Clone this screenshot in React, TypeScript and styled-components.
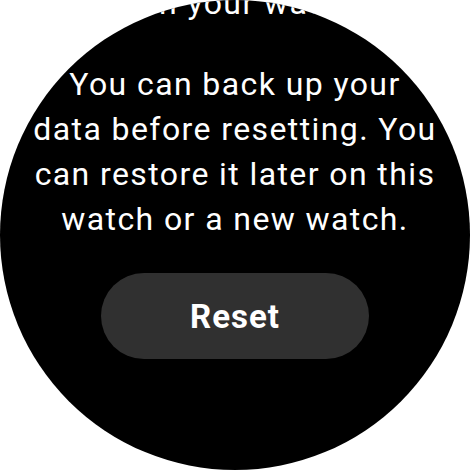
import styled, { createGlobalStyle } from "styled-components";

const GlobalStyle = createGlobalStyle`
  html, body {
    margin: 0;
    padding: 0;
    background: #ffffff;
  }
  body {
    font-family: Roboto, "Liberation Sans", sans-serif;
    -webkit-font-smoothing: antialiased;
  }
`;

const WatchScreen = styled.div`
  width: 470px;
  height: 470px;
  border-radius: 50%;
  background: #000000;
  overflow: hidden;
`;

// the list is scrolled down, so the top of it sits above the screen
const ScrollContent = styled.div<{ $offset: number }>`
  display: flex;
  flex-direction: column;
  align-items: center;
  margin-top: ${(p) => -p.$offset}px;
`;

const Message = styled.p<{ $spaceAfter: number }>`
  width: 404px;
  margin: 0 0 ${(p) => p.$spaceAfter}px;
  color: #ffffff;
  font-size: 32px;
  line-height: 45px;
  letter-spacing: 1.4px;
  text-align: center;
`;

const PillButton = styled.button`
  width: 268px;
  height: 86px;
  border: none;
  border-radius: 43px;
  background: #303030;
  color: #ffffff;
  font-family: Roboto, "Liberation Sans", sans-serif;
  font-size: 33px;
  font-weight: 700;
  letter-spacing: 1px;
  cursor: pointer;
`;

const App = () => {
  return (
    <>
      <GlobalStyle />
      <WatchScreen>
        <ScrollContent $offset={64}>
          <Message $spaceAfter={36}>
            This erases all data that
            <br />
            is on your watch.
          </Message>
          <Message $spaceAfter={31}>
            You can back up your data before resetting. You can restore it later on this watch or a new watch.
          </Message>
          <PillButton>Reset</PillButton>
        </ScrollContent>
      </WatchScreen>
    </>
  );
};

export default App;
